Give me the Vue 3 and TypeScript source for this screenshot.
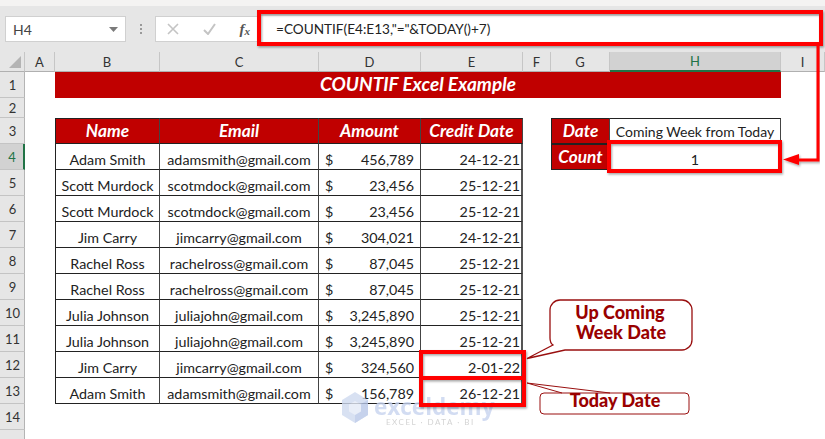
<template>
  <div class="app">
    <div class="top-strip"></div>
    <div class="formula-bar">
      <div class="name-box">
        <span>H4</span>
        <svg width="9" height="5" viewBox="0 0 9 5"><path d="M0 0h9L4.500 5z" fill="#7a7a7a" /></svg>
      </div>
      <div class="dots"><i></i><i></i><i></i></div>
      <div class="fx-box">
        <svg width="12" height="12" viewBox="0 0 12 12"><path d="M1 1l10 10M11 1L1 11" stroke="#c4c4c4" stroke-width="1.600" fill="none" /></svg>
        <svg width="13" height="12" viewBox="0 0 13 12"><path d="M1 7l4 4 7-10" stroke="#c4c4c4" stroke-width="2" fill="none" /></svg>
        <span class="fx">f<sub>x</sub></span>
      </div>
      <div class="formula">=COUNTIF(E4:E13,"="&amp;TODAY()+7)</div>
    </div>

    <div class="sheet">
      <div class="corner"><svg width="12" height="12" viewBox="0 0 12 12"><path d="M12 0v12H0z" fill="#b4b4b4" /></svg></div>
      <div
        v-for="c in columns"
        :key="c"
        class="col-head"
        :class="{ active: c === 'H' }"
      >{{ c }}</div>

      <div
        v-for="r in rowNumbers"
        :key="r"
        class="row-head"
        :class="{ active: r === 4 }"
        :style="{ gridRow: r + 1 }"
      >{{ r }}</div>
      <div class="row-head" :style="{ gridRow: 16 }"></div>

      <div class="title">COUNTIF Excel Example</div>

      <template v-for="(h, i) in headers" :key="h">
        <div class="cell head" :class="{ first: i === 0 }" :style="{ gridColumn: i + 3, gridRow: 4 }">{{ h }}</div>
      </template>

      <template v-for="(row, i) in rows" :key="i">
        <div class="cell center first" :style="{ gridColumn: 3, gridRow: i + 5 }">{{ row.name }}</div>
        <div class="cell center" :style="{ gridColumn: 4, gridRow: i + 5 }">{{ row.email }}</div>
        <div class="cell money" :style="{ gridColumn: 5, gridRow: i + 5 }"><span>$</span><span>{{ row.amount }}</span></div>
        <div class="cell right" :style="{ gridColumn: 6, gridRow: i + 5 }">{{ row.date }}</div>
      </template>

      <div class="cell head first side-a">Date</div>
      <div class="cell center side-b">Coming Week from Today</div>
      <div class="cell head first side-c">Count</div>
      <div class="cell center side-d">1</div>

      <div class="watermark">
        <svg width="28" height="32" viewBox="0 0 28 32">
          <path d="M14 0l13 8v15l-13 8-13-8V8z" fill="#cfdaf0" />
          <path d="M14 15l13-7v15l-13 8z" fill="#b9c8e8" />
          <path d="M14 9l6 3.500v7L14 23l-6-3.500v-7z" fill="#e4eaf7" />
        </svg>
        <div>
          <div class="wm-name">exceldemy</div>
          <div class="wm-sub">EXCEL · DATA · BI</div>
        </div>
      </div>
    </div>

    <svg class="notes" width="825" height="439" viewBox="0 0 825 439">
      <defs>
        <filter id="soft" x="-5%" y="-5%" width="110%" height="115%">
          <feDropShadow dx="1" dy="1.500" stdDeviation="1" flood-color="#000" flood-opacity="0.350" />
        </filter>
      </defs>
      <g fill="none" stroke="#ff0000" stroke-width="4" filter="url(#soft)">
        <rect x="259" y="12" width="562" height="32" />
        <rect x="609" y="142" width="171" height="29" />
        <rect x="421" y="352" width="103" height="26" />
        <rect x="421" y="378" width="103" height="27" />
      </g>
      <g filter="url(#soft)">
        <path d="M818 45V160H795" fill="none" stroke="#ff0000" stroke-width="3" />
        <path d="M783 159.500l16-5.500v11z" fill="#ff0000" />
      </g>
      <path
        d="M560 300H682a10 10 0 0 1 10 10V340a10 10 0 0 1 -10 10H565L527 358.500 553 345Q550 343 550 338V310a10 10 0 0 1 10-10z"
        class="callout"
      />
      <path
        d="M544 393H610L527 383 562 393M544 393a4 4 0 0 0 -4 4V410a4 4 0 0 0 4 4H685a4 4 0 0 0 4-4V397a4 4 0 0 0 -4-4H610"
        class="callout thin"
      />
      <text x="620" y="319" class="note-text">Up Coming</text>
      <text x="621" y="339" class="note-text">Week Date</text>
      <text x="615" y="407" class="note-text">Today Date</text>
    </svg>
  </div>
</template>

<script setup lang="ts">
const columns = ['A', 'B', 'C', 'D', 'E', 'F', 'G', 'H', 'I']
const rowNumbers = Array.from({ length: 14 }, (_, i) => i + 1)
const headers = ['Name', 'Email', 'Amount', 'Credit Date']

const rows = [
  { name: 'Adam Smith', email: 'adamsmith@gmail.com', amount: '456,789', date: '24-12-21' },
  { name: 'Scott Murdock', email: 'scotmdock@gmail.com', amount: '23,456', date: '25-12-21' },
  { name: 'Scott Murdock', email: 'scotmdock@gmail.com', amount: '23,456', date: '25-12-21' },
  { name: 'Jim Carry', email: 'jimcarry@gmail.com', amount: '304,021', date: '24-12-21' },
  { name: 'Rachel Ross', email: 'rachelross@gmail.com', amount: '87,045', date: '25-12-21' },
  { name: 'Rachel Ross', email: 'rachelross@gmail.com', amount: '87,045', date: '25-12-21' },
  { name: 'Julia Johnson', email: 'juliajohn@gmail.com', amount: '3,245,890', date: '25-12-21' },
  { name: 'Julia Johnson', email: 'juliajohn@gmail.com', amount: '3,245,890', date: '25-12-21' },
  { name: 'Jim Carry', email: 'jimcarry@gmail.com', amount: '324,560', date: '2-01-22' },
  { name: 'Adam Smith', email: 'adamsmith@gmail.com', amount: '156,789', date: '26-12-21' },
]
</script>

<style>
html,
body {
  margin: 0;
  background: #fff;
  overflow: hidden;
}
</style>

<style scoped>
.app {
  position: relative;
  width: 825px;
  height: 439px;
  overflow: hidden;
  font-family: Lato, "Liberation Sans", sans-serif;
  color: #222;
  background: #fff;
}

.top-strip {
  height: 6px;
  background: #f4f3f2;
}

.formula-bar {
  height: 46px;
  box-sizing: border-box;
  padding: 10px 4px 10px 5px;
  display: flex;
  background: #e6e6e6;
  font-size: 14px;
}

.name-box {
  width: 121px;
  box-sizing: border-box;
  padding: 0 7px;
  display: flex;
  align-items: center;
  justify-content: space-between;
  background: #fff;
  border: 1px solid #d0d0d0;
  color: #444;
}

.dots {
  width: 29px;
  display: flex;
  flex-direction: column;
  align-items: center;
  justify-content: center;
  gap: 2px;
}

.dots i {
  width: 2px;
  height: 2px;
  background: #999;
}

.fx-box {
  width: 104px;
  box-sizing: border-box;
  padding: 0 9px 0 11px;
  display: flex;
  align-items: center;
  justify-content: space-between;
  background: #fff;
  border: 1px solid #d0d0d0;
  border-right: 0;
}

.fx {
  font-family: "Liberation Serif", serif;
  font-style: italic;
  font-weight: bold;
  font-size: 15px;
  color: #555;
}

.fx sub {
  font-size: 11px;
  vertical-align: -1px;
}

.formula {
  flex: 1;
  display: flex;
  align-items: center;
  padding-left: 17px;
  background: #fff;
  font-size: 13.600px;
}

.sheet {
  position: relative;
  display: grid;
  grid-template-columns: 25px 30px 105px 159px 102px 102px 28px 59px 171px 44px;
  grid-template-rows: 20px 26px 20px repeat(13, 26px);
  font-size: 14.300px;
}

.corner {
  display: flex;
  align-items: flex-end;
  justify-content: flex-end;
  padding: 0 3px 3px 0;
  box-sizing: border-box;
  background: #e6e6e6;
  border-right: 1px solid #c6c6c6;
  border-bottom: 1px solid #b0b0b0;
}

.col-head {
  display: flex;
  align-items: center;
  justify-content: center;
  background: #e6e6e6;
  border-right: 1px solid #c6c6c6;
  border-bottom: 1px solid #b0b0b0;
  box-sizing: border-box;
  font-size: 13px;
  color: #333;
}

.col-head.active {
  background: #d2d2d2;
  border-bottom: 2px solid #217346;
  color: #217346;
}

.row-head {
  grid-column: 1;
  display: flex;
  align-items: center;
  justify-content: center;
  box-sizing: border-box;
  padding-left: 1px;
  background: #e6e6e6;
  border-right: 1px solid #b4b4b4;
  border-bottom: 1px solid #c4c4c4;
  font-size: 13px;
  color: #333;
}

.row-head.active {
  background: #d2d2d2;
  border-right: 2px solid #217346;
  color: #217346;
}

.title {
  grid-column: 3 / 10;
  grid-row: 2;
  display: flex;
  align-items: center;
  justify-content: center;
  box-sizing: border-box;
  padding-bottom: 3px;
  background: #c00000;
  color: #fff;
  font-size: 19px;
  font-weight: 700;
  font-style: italic;
}

.cell {
  display: flex;
  align-items: flex-end;
  box-sizing: border-box;
  padding-bottom: 1px;
  border-right: 1px solid #444;
  border-bottom: 1px solid #222;
  white-space: nowrap;
}

.cell.first {
  border-left: 1px solid #222;
}

.cell.head {
  align-items: center;
  justify-content: center;
  padding-bottom: 2px;
  background: #c00000;
  color: #fff;
  font-size: 17.300px;
  font-weight: 700;
  font-style: italic;
  border-top: 1px solid #222;
}

.center {
  justify-content: center;
}

.right {
  justify-content: flex-end;
  padding-right: 1px;
  border-right: 2px solid #555;
}

.money {
  justify-content: space-between;
  padding: 0 6px 1px 6px;
}

.side-a {
  grid-column: 8;
  grid-row: 4;
}

.side-b {
  grid-column: 9;
  grid-row: 4;
  border-top: 1px solid #222;
  padding-bottom: 3px;
  font-size: 14px;
}

.side-c {
  grid-column: 8;
  grid-row: 5;
}

.side-d {
  grid-column: 9;
  grid-row: 5;
}

.watermark {
  position: absolute;
  left: 341px;
  top: 340px;
  display: flex;
  gap: 5px;
  opacity: 0.800;
  pointer-events: none;
}

.wm-name {
  font-family: "Open Sans", sans-serif;
  font-size: 22.500px;
  font-weight: 700;
  line-height: 22px;
  margin-top: 4px;
  color: #c8d4ef;
}

.wm-sub {
  font-size: 8px;
  line-height: 9px;
  letter-spacing: 1.500px;
  padding-left: 12px;
  color: #c9c9c9;
}

.notes {
  position: absolute;
  left: 0;
  top: 0;
  pointer-events: none;
}

.callout {
  fill: #fff;
  stroke: #990f0f;
  stroke-width: 1.300;
}

.callout.thin {
  stroke-width: 1;
}

.note-text {
  font-family: Lato, "Liberation Sans", sans-serif;
  font-size: 18px;
  font-weight: 900;
  fill: #990000;
  text-anchor: middle;
}
</style>
